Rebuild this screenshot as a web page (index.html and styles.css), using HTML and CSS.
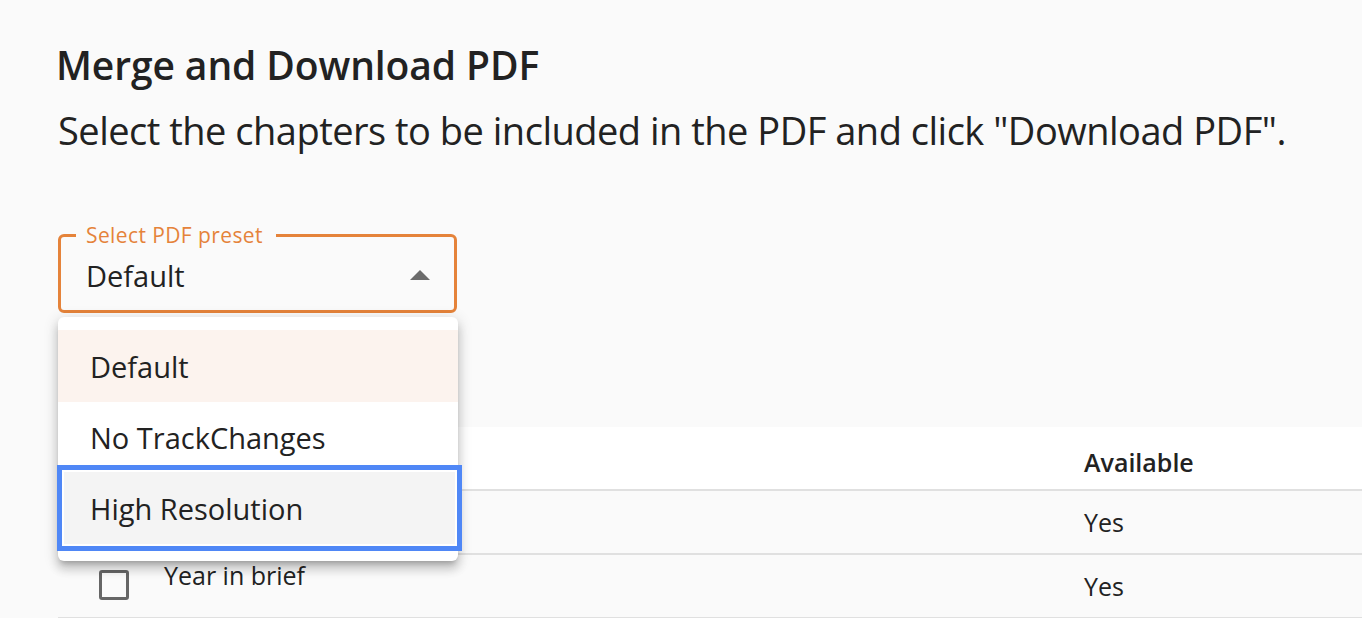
FILE: index.html
```html
<!DOCTYPE html>
<html lang="en">
<head>
<meta charset="utf-8">
<title>Merge and Download PDF</title>
<link rel="stylesheet" href="styles.css">
</head>
<body>
<main class="page">
  <h1 class="title">Merge and Download PDF</h1>
  <p class="intro">Select the chapters to be included in the PDF and click "Download PDF".</p>

  <div class="preset">
    <fieldset class="preset-field">
      <legend class="preset-label">Select PDF preset</legend>
      <div class="preset-value">
        <span>Default</span>
        <svg class="preset-arrow" width="20" height="10" viewBox="0 0 20 10"><polygon points="0,10 10,0 20,10"/></svg>
      </div>
    </fieldset>
    <ul class="menu">
      <li class="menu-item is-hover">Default</li>
      <li class="menu-item is-short">No TrackChanges</li>
      <li class="menu-item is-focus">High Resolution</li>
    </ul>
  </div>

  <div class="table">
    <div class="row row-head">
      <div class="cell cell-check"></div>
      <div class="cell cell-title"></div>
      <div class="cell cell-avail">Available</div>
    </div>
    <div class="row">
      <div class="cell cell-check"><span class="checkbox"></span></div>
      <div class="cell cell-title"></div>
      <div class="cell cell-avail">Yes</div>
    </div>
    <div class="row">
      <div class="cell cell-check"><span class="checkbox"></span></div>
      <div class="cell cell-title">Year in brief</div>
      <div class="cell cell-avail">Yes</div>
    </div>
  </div>
</main>
</body>
</html>
```

FILE: styles.css
```css
* { box-sizing: border-box; }
html, body { margin: 0; }
body {
  background: #fafafa;
  font-family: "Open Sans", "Noto Sans", sans-serif;
  color: #222;
  overflow: hidden;
}
.page { padding: 41px 0 0 58px; }

.title {
  margin: 0 0 0 -2px;
  font-size: 39px;
  line-height: 48px;
  font-weight: 600;
  letter-spacing: -0.1px;
}
.intro {
  margin: 17px 0 0;
  font-size: 38px;
  line-height: 48px;
  letter-spacing: -0.5px;
}

.preset {
  position: relative;
  width: 400px;
  margin-top: 71px;
}
.preset-field {
  width: 399px;
  margin: 0;
  min-width: 0;
  border: 3px solid #e5833a;
  border-radius: 6px;
  padding: 9px 24px 15px 25px;
}
.preset-label {
  margin-left: -10px;
  padding: 0 13px 0 10px;
  font-size: 21px;
  line-height: 21px;
  letter-spacing: 0.4px;
  color: #e5833a;
}
.preset-value {
  display: flex;
  justify-content: space-between;
  align-items: center;
  height: 40px;
  font-size: 29px;
}
.preset-arrow { fill: #6b6b6b; display: block; }

.menu {
  position: absolute;
  left: 0;
  top: calc(100% + 4px);
  z-index: 2;
  width: 400px;
  margin: 0;
  padding: 13px 0 15px;
  list-style: none;
  background: #fff;
  border-radius: 6px;
  box-shadow: 0 5px 5px -3px rgba(0,0,0,0.2), 0 8px 10px 1px rgba(0,0,0,0.14), 0 3px 14px 2px rgba(0,0,0,0.12);
}
.menu-item {
  display: flex;
  align-items: center;
  height: 72px;
  padding-left: 32px;
  font-size: 29px;
}
.menu-item.is-hover { background: #fcf3ee; }
.menu-item.is-short { height: 70px; }
.menu-item.is-focus {
  margin: 0 3px 2px 6px;
  padding-left: 26px;
  background: #f4f4f4;
  box-shadow: 0 0 0 2px #fff, 0 0 0 7px #4f87f6;
}

.table { margin-top: 114px; }
.row {
  display: grid;
  grid-template-columns: 106px 920px 1fr;
  height: 64px;
  border-bottom: 2px solid #e0e0e0;
  font-size: 25px;
  line-height: 30px;
}
.row-head { background: #fff; font-weight: 600; }
.row-head .cell { padding-top: 20px; }
.cell-check { padding: 15px 0 0 41px; }
.cell-title { padding-top: 5px; }
.cell-avail { padding-top: 16px; }
.checkbox {
  display: block;
  width: 30px;
  height: 30px;
  border: 3px solid #666;
  border-radius: 3px;
}
```
